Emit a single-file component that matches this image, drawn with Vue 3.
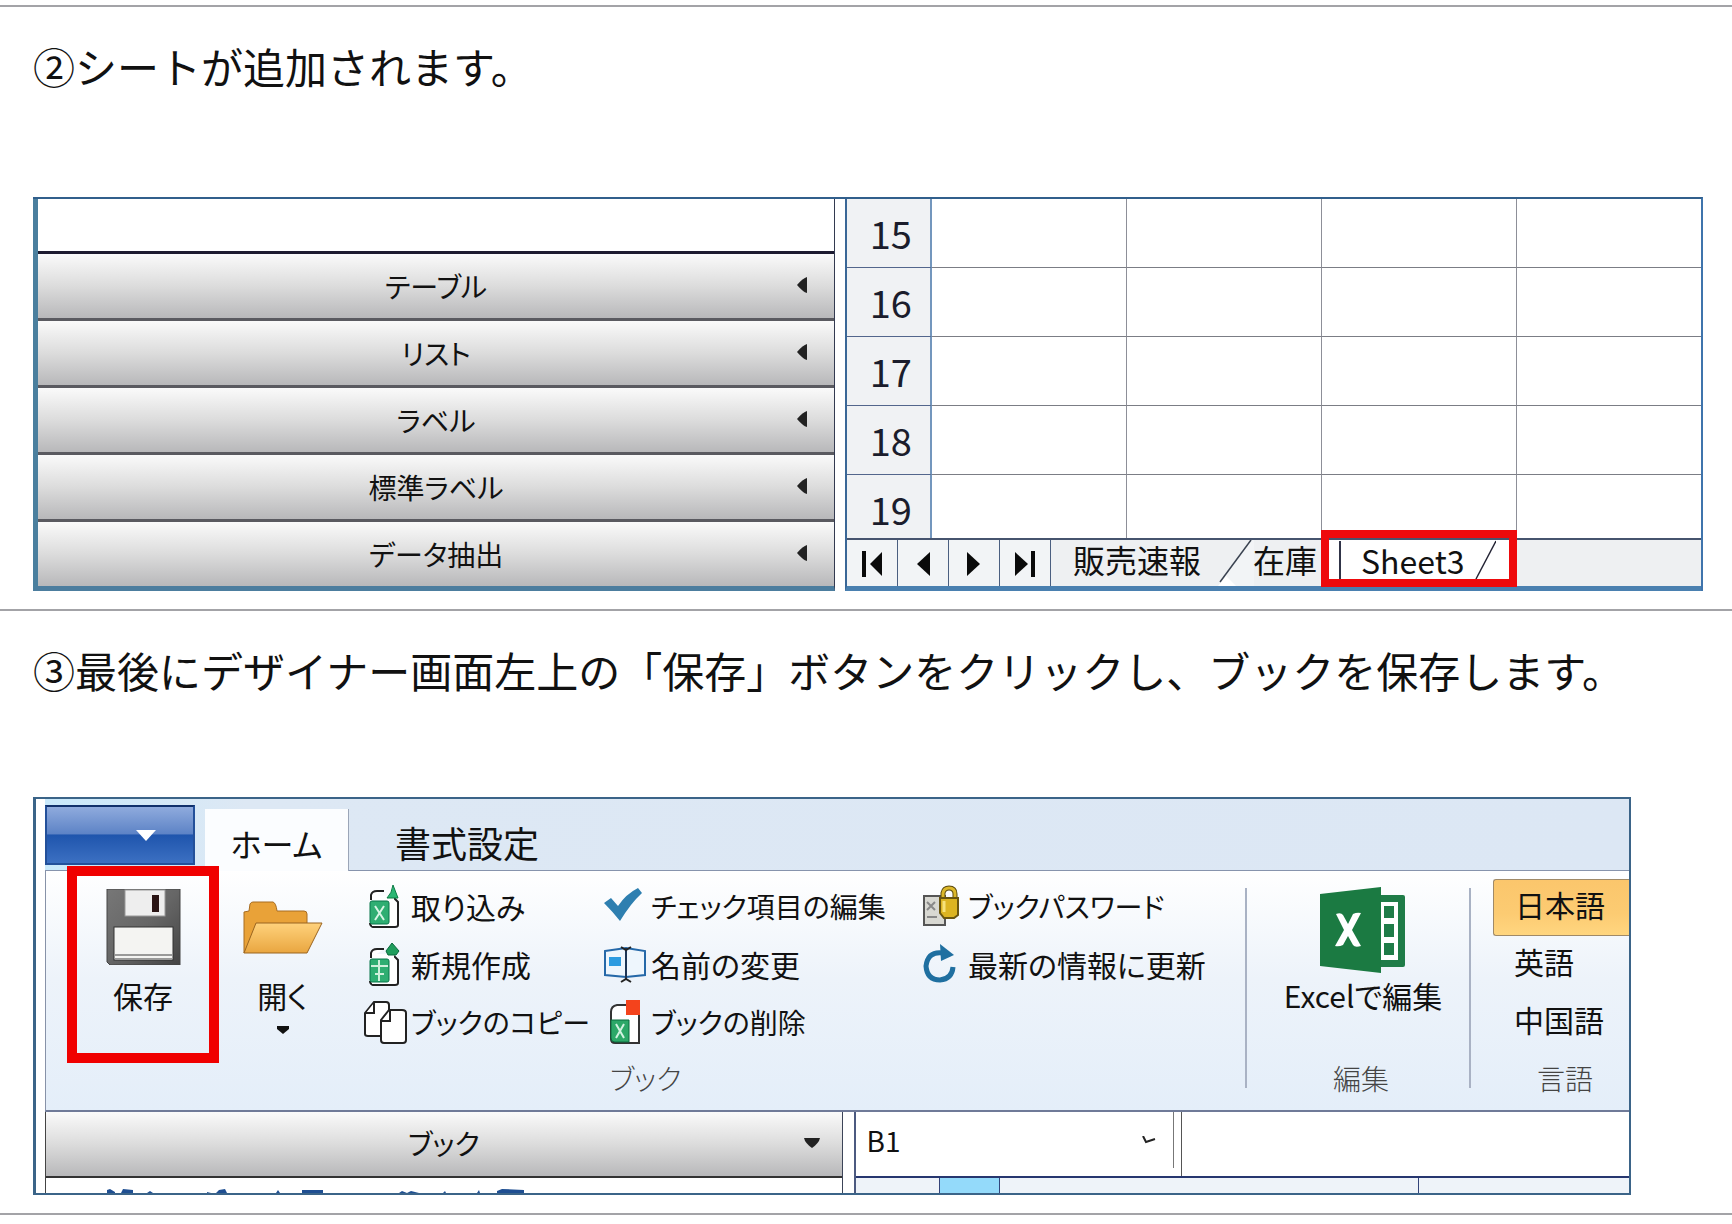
<script setup>
import { ref } from 'vue'

const sections = ['テーブル', 'リスト', 'ラベル', '標準ラベル', 'データ抽出']
const rows = [15, 16, 17, 18, 19]
const navs = [
  { label: '先頭のシート', bar: 7, tri: '27,12 27,36 15,24' },
  { label: '前のシート', bar: null, tri: '24,12 24,36 11,24' },
  { label: '次のシート', bar: null, tri: '10,12 10,36 23,24' },
  { label: '最後のシート', bar: 23, tri: '7,12 7,36 20,24' }
]
const commands = [
  { text: '取り込み', icon: 'import' },
  { text: 'チェック項目の編集', icon: 'check', kana: true },
  { text: 'ブックパスワード', icon: 'lock', kana: true },
  { text: '新規作成', icon: 'new' },
  { text: '名前の変更', icon: 'rename' },
  { text: '最新の情報に更新', icon: 'refresh' },
  { text: 'ブックのコピー', icon: 'copy', kana: true },
  { text: 'ブックの削除', icon: 'delete', kana: true }
]
const languages = ['日本語', '英語', '中国語']
const language = ref('日本語')
const cell = ref('B1')
</script>

<template>
  <main class="page">
    <section class="step">
      <h2>②シートが追加されます。</h2>
      <div class="shot sheet-shot">
        <div class="accordion">
          <div class="blank"></div>
          <button v-for="s in sections" :key="s" class="bar">
            {{ s }}
            <svg class="left-arrow" width="10" height="16" viewBox="0 0 10 16"><path d="M10 0V16Q6 15 0 8Q6 1 10 0Z" fill="#222" /></svg>
          </button>
        </div>
        <div class="sheet">
          <div class="grid-view">
            <table>
              <colgroup><col class="c-head" /><col class="c-cell" /><col class="c-cell" /><col class="c-cell" /><col /></colgroup>
              <tbody>
                <tr v-for="r in rows" :key="r">
                  <th scope="row">{{ r }}</th><td></td><td></td><td></td><td></td>
                </tr>
              </tbody>
            </table>
          </div>
          <div class="tabs">
            <button v-for="n in navs" :key="n.label" class="nav" :aria-label="n.label">
              <svg width="34" height="48" viewBox="0 0 34 48">
                <rect v-if="n.bar !== null" :x="n.bar" y="11" width="4" height="26" fill="#0a0a0a" />
                <polygon :points="n.tri" fill="#0a0a0a" />
              </svg>
            </button>
            <button class="tab tab-sales">販売速報</button>
            <svg class="slash" width="36" height="46" viewBox="0 0 36 46">
              <path d="M33 0H36V46H10L2 42Z" fill="#f2f4f6" />
              <path d="M0 46L8 36L18 46Z" fill="#fff" /><path d="M33 0L2 42" stroke="#3a4250" stroke-width="1.5" />
            </svg>
            <button class="tab tab-stock">在庫</button>
            <button class="tab tab-active">
              <span class="edge"></span>Sheet3
              <svg width="24" height="42" viewBox="0 0 24 42"><path d="M24 2L4 40" stroke="#223" stroke-width="1.5" /></svg>
            </button>
          </div>
        </div>
      </div>
    </section>

    <section class="step">
      <h2>③最後にデザイナー画面左上の「保存」ボタンをクリックし、ブックを保存します。</h2>
      <div class="shot ribbon-shot">
        <div class="ribbon-tabs">
          <button class="file" aria-label="ファイル">
            <svg width="20" height="11" viewBox="0 0 20 11"><path d="M0 0H20L10 11Z" fill="#fff" /></svg>
          </button>
          <button class="rtab current">ホーム</button>
          <button class="rtab">書式設定</button>
        </div>

        <div class="ribbon">
          <div class="group book">
            <div class="group-body">
              <button class="big save">
                <svg class="pic" width="76" height="76" viewBox="0 0 76 76">
                  <defs><linearGradient id="steel" x1="0" y1="0" x2="1" y2="1"><stop offset="0" stop-color="#777" /><stop offset=".5" stop-color="#666" /><stop offset="1" stop-color="#444" /></linearGradient></defs>
                  <path d="M2 0H75V76H5L2 73Z" fill="url(#steel)" stroke="#444" />
                  <rect x="20" y="1" width="40" height="26" fill="#eee" stroke="#999" />
                  <rect x="47" y="6" width="7" height="17" fill="#2a1414" />
                  <rect x="9" y="38" width="59" height="33" fill="#f4f4f2" stroke="#333" />
                  <path d="M10 66H67M10 70H67" stroke="#999" stroke-width="2" />
                </svg>
                <span>保存</span>
              </button>
              <button class="big open">
                <svg class="pic" width="82" height="76" viewBox="0 0 82 76">
                  <defs><linearGradient id="manila" x1="0" y1="0" x2="0" y2="1"><stop offset="0" stop-color="#ffd27c" /><stop offset="1" stop-color="#e9a640" /></linearGradient></defs>
                  <path d="M2 64L2 23L7 22L8 15Q9 13 11 13H31Q34 14 35 22H62Q65 22 65 25V36H20Z" fill="#e9a238" stroke="#a86c20" />
                  <path d="M14 34H80L65 64H2Z" fill="url(#manila)" stroke="#9a6420" />
                </svg>
                <span>開く</span>
                <svg width="14" height="8" viewBox="0 0 14 8"><path d="M1 0H13V3L7 8L1 3Z" fill="#111" /></svg>
              </button>
              <div class="commands">
                <button v-for="c in commands" :key="c.text" class="command" :class="{ kana: c.kana }">
                  <span class="icon">
                    <svg v-if="c.icon === 'import' || c.icon === 'new'" width="40" height="44" viewBox="0 0 40 44">
                      <path d="M7 16V11Q8 7 13 7H20M30 14L34 18V41Q34 43 31 43H9Q6 42 6 39" fill="#fff" stroke="#222" stroke-width="2" />
                      <path d="M8 12H30V42H8Z" fill="#fff" /><rect x="6" y="17" width="19" height="23" rx="2" fill="#2fae72" stroke="#08764a" />
                      <path v-if="c.icon === 'import'" d="M11 22L20 36M20 22L11 36" stroke="#d8f5e5" stroke-width="2" />
                      <path v-else d="M7 24H24M15 18V39M11 32H20" stroke="#d0f0dc" stroke-width="2" />
                      <path v-if="c.icon === 'import'" d="M29 1L34 14H23Q28 9 29 1Z" fill="#2bb673" stroke="#0a7a43" />
                      <path v-else d="M28 1L35 9L32 13H24L22 9Z" fill="#1f9d5c" stroke="#08683b" />
                    </svg>
                    <svg v-else-if="c.icon === 'copy'" width="46" height="44" viewBox="0 0 46 44" fill="#fff" stroke="#222" stroke-width="2">
                      <path d="M1 34V13L10 2H22Q25 2 25 5V34Q25 36 22 36H4Q1 36 1 34Z" /><path d="M2 13H10V3" />
                      <path d="M17 40V20L25 10H38Q42 10 42 13V40Q42 43 39 43H20Q17 43 17 40Z" /><path d="M18 21H26V11" />
                    </svg>
                    <svg v-else-if="c.icon === 'check'" width="40" height="44" viewBox="0 0 40 44"><path d="M0 19L7 14L14 22Q22 10 34 4L38 9Q27 19 16 37Q9 28 0 19Z" fill="#2e7fb0" /></svg>
                    <svg v-else-if="c.icon === 'rename'" width="44" height="44" viewBox="0 0 44 44">
                      <path d="M1 9L22 6L41 9V33L22 35L1 33Z" fill="#eef6fd" stroke="#2568a8" stroke-width="2" />
                      <rect x="5" y="15" width="12" height="9" fill="#2c9be0" /><path d="M22 6V37" stroke="#1c3454" stroke-width="2" />
                      <path d="M17 5L22 8L27 5M17 40L22 37L27 40" fill="none" stroke="#222" stroke-width="2" />
                    </svg>
                    <svg v-else-if="c.icon === 'delete'" width="40" height="44" viewBox="0 0 40 44">
                      <path d="M7 12Q7 6 13 5H35V43H11Q7 43 7 39Z" fill="#fff" stroke="#333" stroke-width="2" />
                      <path d="M7 20H25V42H11Q7 42 7 38Z" fill="#2da868" stroke="#0a6c3e" /><path d="M12 24L20 38M20 24L12 38" stroke="#d3f3e1" stroke-width="2" />
                      <rect x="22" y="0" width="14" height="15" fill="#f4431c" />
                    </svg>
                    <svg v-else-if="c.icon === 'lock'" width="40" height="44" viewBox="0 0 40 44">
                      <path d="M3 12H24V41H3Z" fill="#d8d8d2" stroke="#555" stroke-width="2" /><path d="M6 18L14 26M14 18L6 26M6 33H16" stroke="#888" stroke-width="2" />
                      <path d="M22 17V9Q23 4 28 4Q34 4 34 10V17" fill="none" stroke="#5c4a10" stroke-width="5" /><path d="M22 17V9Q23 4 28 4Q34 4 34 10V17" fill="none" stroke="#dcb82a" stroke-width="3" />
                      <path d="M19 14H37V31L33 34H23L19 29Z" fill="#dcb422" stroke="#695510" stroke-width="2" /><path d="M23 17V28" stroke="#f7e27a" stroke-width="3" />
                    </svg>
                    <svg v-else width="40" height="44" viewBox="0 0 40 44">
                      <path d="M22 11Q7 9 5 24Q6 38 19 38Q31 37 32 25" fill="none" stroke="#1f6fa0" stroke-width="5" /><path d="M19 2L33 13L20 19Z" fill="#1f6fa0" />
                    </svg>
                  </span>
                  {{ c.text }}
                </button>
              </div>
            </div>
            <div class="caption">ブック</div>
          </div>

          <div class="group edit">
            <div class="group-body">
              <button class="big excel">
                <svg class="pic" width="88" height="86" viewBox="0 0 88 86">
                  <path d="M60 8H84Q86 8 86 10V78Q86 80 84 80H60Z" fill="#1f7c48" /><path d="M62 15H79V73H62Z" fill="#fff" />
                  <path d="M65 19H75V31H65ZM65 37H75V50H65ZM65 56H75V68H65Z" fill="#1f7c48" />
                  <path d="M1 7L62 0V86L1 79Z" fill="#1b7a42" />
                  <path d="M17 27Q22 25 24 28L29 37L34 27Q38 25 42 26L33 43L42 59Q36 61 34 58L29 49L24 58Q20 60 16 59L25 43Z" fill="#fff" />
                </svg>
                <span>Excelで編集</span>
              </button>
            </div>
            <div class="caption">編集</div>
          </div>

          <div class="group lang">
            <div class="group-body">
              <button v-for="l in languages" :key="l" class="language" :class="{ on: l === language }" @click="language = l">{{ l }}</button>
            </div>
            <div class="caption">言語</div>
          </div>
        </div>

        <div class="lower">
          <div class="book-pane">
            <button class="bar">
              ブック
              <svg class="down-arrow" width="16" height="10" viewBox="0 0 16 10"><path d="M0 0H16Q15 5 8 10Q1 5 0 0Z" fill="#222" /></svg>
            </button>
            <div class="clipped">
              <svg width="420" height="4" viewBox="0 0 420 4"><path d="M0 4V1L3 0L8 3V4ZM14 4L16 0L26 1V4ZM40 4L43 2L46 4ZM100 4V3L104 4ZM109 4L112 1L118 0L120 4ZM169 4L171 1L173 4ZM195 4V1H216V4ZM292 4L295 2L300 4L304 2L312 4ZM336 4L338 2L339 4ZM370 4L372 1L373 4ZM390 4V2L395 0L417 1V4Z" fill="#1f4f92" /></svg>
            </div>
          </div>
          <div class="cell-pane">
            <div class="formula">
              <div class="name-box">
                <select v-model="cell" aria-label="名前ボックス"><option>B1</option></select>
                <svg width="14" height="8" viewBox="0 0 14 8"><path d="M1 0L4 6L13 3" fill="none" stroke="#222" stroke-width="2" /></svg>
              </div>
              <input class="formula-input" aria-label="数式" />
            </div>
            <div class="heads"><i class="h1"></i><i class="picked"></i><i class="h2"></i><i class="h3"></i></div>
          </div>
        </div>
      </div>
    </section>
  </main>
</template>

<style>
body { margin: 0; background: #fff; }
</style>

<style scoped>
* { box-sizing: border-box; }
.page {
  padding-top: 5px;
  color: #111;
  font-family: "Noto Sans CJK JP", sans-serif;
  overflow: hidden;
}
button, select, input {
  margin: 0; padding: 0; border: 0; background: none;
  color: inherit; font: inherit; font-feature-settings: "palt"; white-space: nowrap;
}
svg { display: block; flex: none; }
.step { padding: 29px 0 18px 33px; border-top: 2px solid #a3a3a7; }
.step:last-child { border-bottom: 2px solid #a3a3a7; }
h2 {
  margin: 0 0 101px; font-size: 42px; line-height: 60px; font-weight: 400; white-space: nowrap;
}
.step:last-child h2 { margin-bottom: 97px; }

.sheet-shot {
  display: grid;
  grid-template-columns: minmax(0, 803fr) 10px minmax(0, 857fr);
  margin-right: 29px;
  border-top: 2px solid #315f8c;
  border-right: 2px solid #3f74ac;
}
.accordion {
  border-left: 5px solid #4a7f9e; border-right: 1px solid #333a50; border-bottom: 5px solid #4c7d9e;
}
.blank { height: 52px; }
.bar {
  position: relative; display: flex; align-items: center; justify-content: center;
  width: 100%; height: 67px;
  border-top: 3px solid #5a5a60;
  background: linear-gradient(#fafafa, #dcdcdc 50%, #b8b8ba);
  font-size: 28px; line-height: 40px;
}
.blank + .bar { border-top-color: #1d1b30; }
.left-arrow { position: absolute; right: 27px; top: 23px; }
.sheet { grid-column: 3; border-left: 2px solid #3a6797; border-bottom: 5px solid #4a80b0; min-width: 0; }
.grid-view { height: 339px; overflow: hidden; }
table { width: 100%; table-layout: fixed; border-collapse: separate; border-spacing: 0; }
.c-head { width: 10%; }
.c-cell { width: 22.8%; }
tr { height: 69px; }
th, td { padding: 0; border-right: 1px solid #8d8f98; border-bottom: 1px solid #7b7d85; }
td:last-child { border-right: 0; }
th {
  padding-left: 4px; border-right: 2px solid #7396bd; border-bottom-color: #53668c;
  background: #f0f2f4; font-size: 38px; line-height: 54px; font-weight: 400; color: #1b1d2c;
}
.tabs {
  display: flex; height: 48px; border-top: 2px solid #46546e; background: #eef0f2;
}
.nav {
  flex: none; display: flex; justify-content: center; width: 51px; overflow: hidden;
  border-right: 1px solid #4b5f80; background: #f2f4f6;
}
.tab { flex: none; font-size: 32px; line-height: 36px; padding-bottom: 8px; text-align: left; }
.tab-sales { width: 167px; padding-left: 22px; }
.slash { margin-right: -1px; }
.tab-stock { width: 68px; overflow: hidden; }
.tab-active {
  position: relative; display: flex; align-items: center; gap: 8px;
  width: 196px; padding: 0 8px 6px 18px; background: #fff; overflow: visible;
}
.edge { width: 2px; height: 38px; margin-right: 12px; background: #303448; }
.tab-active::after {
  content: ""; position: absolute; inset: -10px 0 -1px; border: 8px solid #ee0a0c;
}

.ribbon-shot {
  margin-right: 101px; padding-left: 9px;
  border: 2px solid #3b6488; border-left-width: 3px;
}
.ribbon-tabs {
  display: flex; align-items: flex-end; height: 72px;
  background: linear-gradient(90deg, #c9e9fb, #dde8f4 200px, #dce7f4);
  border-bottom: 1px solid #8794ad;
}
.file {
  display: flex; align-items: center; justify-content: flex-end;
  width: 150px; height: 60px; margin-bottom: 5px; padding-right: 37px;
  border: 2px solid #23509a; border-top-color: #10306b;
  background: linear-gradient(#8fabdd, #5d83c6 48%, #1f55ad 50%, #3c70c2);
}
.rtab { padding: 0 46px; height: 62px; padding-top: 6px; font-size: 36px; line-height: 48px; }
.current { width: 144px; margin: 0 0 -1px 10px; padding: 6px 0 0; background: #fbfdff; border-right: 1px solid #9aa5b8; font-size: 32px; }
.ribbon {
  display: flex; height: 241px; border-left: 1px solid #8792a8; border-bottom: 2px solid #6f7a98;
  background: linear-gradient(#fff, #edf3fa 45%, #e4eef9);
}
.group { position: relative; padding-top: 7px; }
.group + .group::before {
  content: ""; position: absolute; left: 0; top: 17px; width: 2px; height: 200px; background: #a9b2c4;
}
.group-body { display: flex; height: 174px; }
.book { flex: 1; min-width: 0; }
.edit { flex: none; width: 224px; }
.lang { flex: none; width: 160px; }
.lang .group-body { display: block; padding: 1px 0 0 24px; }
.caption { font-size: 28px; line-height: 52px; text-align: center; font-weight: 300; color: #444; font-feature-settings: "palt"; }
.edit .caption { padding-left: 8px; }
.lang .caption { padding-left: 32px; }
.big {
  display: flex; flex: none; flex-direction: column; align-items: center;
  padding-top: 11px; font-size: 30px; line-height: 38px;
}
.pic { margin-bottom: 11px; }
.save { position: relative; width: 152px; margin-left: 21px; }
.save::after { content: ""; position: absolute; inset: -12px 0 -11px; border: 10px solid #f00000; }
.open { width: 105px; margin-left: 11px; }
.open > svg:last-child { margin-top: 12px; }
.commands {
  display: grid; grid-template-columns: 240px 317px auto; grid-template-rows: repeat(3, 58px);
  justify-content: start; margin-left: 29px;
}
.command { display: flex; align-items: center; height: 56px; font-size: 30px; line-height: 44px; }
.command.kana { font-size: 28px; }
.icon { flex: none; width: 47px; }
.excel { width: 100%; padding-left: 12px; padding-top: 9px; }
.excel .pic { margin-bottom: 3px; }
.language { display: block; width: 100%; height: 58px; padding: 0 0 8px 21px; font-size: 30px; line-height: 44px; text-align: left; }
.language.on { height: 57px; border: 1px solid #a08a68; border-right: 0; border-radius: 3px 0 0 3px; background: linear-gradient(#fbc66c, #fccb72 60%, #ffd67f); }

.lower { display: grid; grid-template-columns: minmax(0, 797fr) 11px minmax(0, 775fr); }
.book-pane { border-left: 1px solid #444; border-right: 1px solid #3c4458; }
.book-pane .bar { height: 66px; border-top: 0; border-bottom: 2px solid #333; padding-bottom: 2px; }
.down-arrow { position: absolute; right: 22px; top: 26px; }
.clipped { display: flex; align-items: flex-end; height: 15px; padding-left: 61px; overflow: hidden; }
.cell-pane { grid-column: 3; border-left: 2px solid #4c5a80; }
.formula { display: flex; height: 66px; border-bottom: 2px solid #26366f; }
.name-box {
  display: flex; align-items: center; flex: none; width: 318px; height: 56px; padding: 0 17px 0 11px;
  border-right: 1px solid #777;
}
.name-box select { flex: 1; appearance: none; font-size: 28px; line-height: 40px; }
.formula-input { flex: 1; min-width: 0; margin-left: 7px; padding: 0 10px; border-left: 1px solid #555; font-size: 28px; }
.heads { display: flex; height: 15px; background: #eef3f9; }
.heads i { border-right: 1px solid #33447a; }
.h1 { width: 84px; }
.picked { width: 60px; background: #94dafa; }
.h2 { flex: 420; }
.h3 { flex: 211; }
.heads .h3 { border-right: 0; }
</style>
